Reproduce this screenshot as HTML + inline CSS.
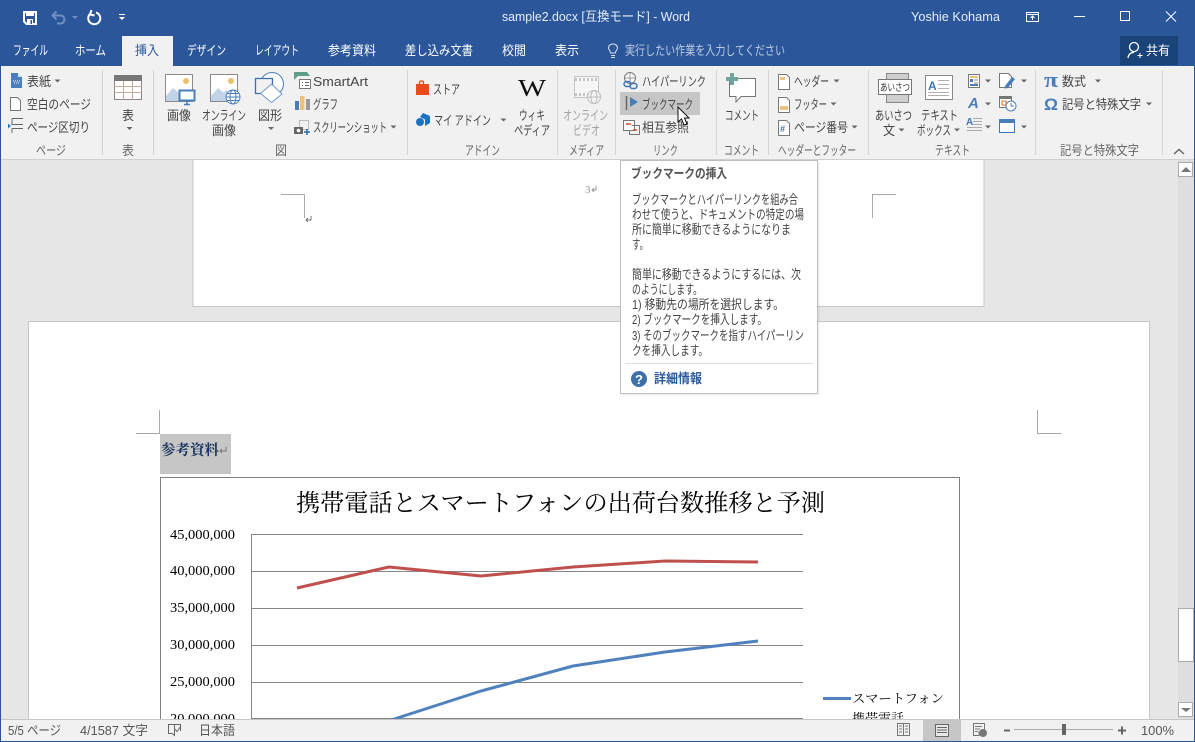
<!DOCTYPE html>
<html lang="ja"><head><meta charset="utf-8"><title>sample2.docx - Word</title>
<style>
html,body{margin:0;padding:0;width:1195px;height:742px;overflow:hidden;background:#e6e6e6}
svg{position:absolute;left:0;top:0;display:block}
text{font-family:"Liberation Sans","Noto Sans CJK JP",sans-serif;font-size:13px;fill:#444;white-space:pre}
.w{fill:#fff}.g{fill:#666}.d{fill:#a3a3a3}
.s{font-family:"Liberation Serif","Noto Serif CJK JP",serif;fill:#000}
.c{fill:#666}
</style></head><body>
<svg width="1195" height="742" viewBox="0 0 1195 742" xmlns="http://www.w3.org/2000/svg">
<!-- doc area -->
<rect x="0" y="160" width="1195" height="560" fill="#e6e6e6"/>
<!-- upper page -->
<rect x="193" y="150" width="791" height="156.500" fill="#fff" stroke="#c6c6c6"/>
<path d="M281 194.500H304.500V218M872.500 218V194.500H896" fill="none" stroke="#a8a8a8"/>
<text x="585" y="193" style="font-size:11px;fill:#999" class="s">3</text>
<path d="M596 186v4h-4m2-2l-2 2 2 2" fill="none" stroke="#999"/>
<path d="M311 216v4h-5m2-2l-2 2 2 2" fill="none" stroke="#777"/>
<!-- lower page -->
<rect x="28.500" y="321.500" width="1121" height="420" fill="#fff" stroke="#c6c6c6"/>
<path d="M159.500 410V433.500H136M1037.500 410V433.500H1061" fill="none" stroke="#a8a8a8"/>
<rect x="160" y="434" width="71" height="40" fill="#c6c6c6"/>
<text x="161" y="455" class="s" textLength="58" lengthAdjust="spacingAndGlyphs" style="font-size:14.500px;font-weight:bold;fill:#17325c">参考資料</text>
<path d="M226 447v4h-6m2-2l-2 2 2 2" fill="none" stroke="#777"/>
<!-- chart -->
<rect x="160.500" y="477.500" width="799" height="270" fill="#fff" stroke="#808080"/>
<text x="296" y="511" class="s" textLength="529" lengthAdjust="spacingAndGlyphs" style="font-size:24px">携帯電話とスマートフォンの出荷台数推移と予測</text>
<g fill="none" stroke="#868686">
<path d="M251.500 534V720M251 534.500H803M251 571.500H803M251 608.500H803M251 645.500H803M251 682.500H803M251 718.500H803"/>
</g>
<text class="s" x="170" y="539" textLength="65" lengthAdjust="spacingAndGlyphs" style="font-size:14px">45,000,000</text>
<text class="s" x="170" y="575" textLength="65" lengthAdjust="spacingAndGlyphs" style="font-size:14px">40,000,000</text>
<text class="s" x="170" y="612" textLength="65" lengthAdjust="spacingAndGlyphs" style="font-size:14px">35,000,000</text>
<text class="s" x="170" y="649" textLength="65" lengthAdjust="spacingAndGlyphs" style="font-size:14px">30,000,000</text>
<text class="s" x="170" y="686" textLength="65" lengthAdjust="spacingAndGlyphs" style="font-size:14px">25,000,000</text>
<text class="s" x="170" y="723" textLength="65" lengthAdjust="spacingAndGlyphs" style="font-size:14px">20,000,000</text>
<polyline points="297,588 389,567 481,576 573,567 665,561 758,562" fill="none" stroke="#c0504d" stroke-width="3" stroke-linejoin="round"/>
<polyline points="385,722 481,691 573,666 665,652 758,641" fill="none" stroke="#4f81bd" stroke-width="3" stroke-linejoin="round"/>
<path d="M823 698.500H851" stroke="#4f81bd" stroke-width="3"/>
<text x="852" y="703" class="s" textLength="92" lengthAdjust="spacingAndGlyphs" style="font-size:13px">スマートフォン</text>
<text x="852" y="723" class="s" textLength="52" lengthAdjust="spacingAndGlyphs" style="font-size:13px">携帯電話</text>
<!-- scrollbar -->
<rect x="1178" y="160" width="16" height="560" fill="#dedede"/>
<rect x="1178.500" y="162.500" width="14" height="14" fill="#fff" stroke="#ababab"/>
<path d="M1181 172l5-5 5 5z" fill="#777"/>
<rect x="1178.500" y="608.500" width="15" height="53" fill="#fff" stroke="#ababab"/>
<rect x="1178.500" y="702.500" width="14" height="14" fill="#fff" stroke="#ababab"/>
<path d="M1181 708h10l-5 4z" fill="#777"/>
<!-- title + tabs -->
<rect x="0" y="0" width="1195" height="66" fill="#2b579a"/>
<rect x="122" y="36" width="51" height="31" fill="#f1f1f1"/>
<rect x="1120" y="36" width="58" height="29" fill="#1a4379"/>
<!-- ribbon -->
<rect x="1" y="66" width="1193" height="93" fill="#f1f1f1"/>
<rect x="0" y="159" width="1195" height="1" fill="#d0d0d0"/>
<path d="M102.500 70V155M153.500 70V155M407.500 70V155M557.500 70V155M615.500 70V155M716.500 70V155M768.500 70V155M868.500 70V155M1035.500 70V155M1162.500 70V155" stroke="#d4d4d4" fill="none"/>
<rect x="620" y="92" width="80" height="23" fill="#c6c6c6"/>
<!-- QAT -->
<path d="M24 12H36V24H26.500L24 21.500Z" fill="#2b579a" stroke="#fff" stroke-width="2"/>
<rect x="26" y="11" width="8" height="5" fill="#fff"/>
<rect x="27" y="19" width="6" height="5" fill="#fff"/>
<rect x="30.500" y="20" width="1.500" height="4" fill="#2b579a"/>
<path d="M53 15.500H60.500C63 15.500 64.500 17.500 64.500 19.500C64.500 21.500 63 23.500 60.500 23.500H57M56.500 11.500L52.500 15.500L56.500 19.500" fill="none" stroke="#6f8fc0" stroke-width="2"/>
<path d="M72 16h6l-3 3z" fill="#6f8fc0"/>
<path d="M90 14A6 6 0 1 0 96 12.500M91.500 10L90 14.500L94.500 15.500" fill="none" stroke="#fff" stroke-width="2"/>
<path d="M119 14.500H125" stroke="#fff"/><path d="M119 17h6l-3 3z" fill="#fff"/>
<!-- title texts -->
<text x="502" y="21" textLength="188" lengthAdjust="spacingAndGlyphs" style="fill:#e6ecf5">sample2.docx [互換モード] - Word</text>
<text x="911" y="21" textLength="89" lengthAdjust="spacingAndGlyphs" style="fill:#e6ecf5">Yoshie Kohama</text>
<path d="M1026.500 12.500H1038.500V21.500H1026.500ZM1026.500 14.500H1038.500M1032.500 20V16M1030.500 18L1032.500 16L1034.500 18" fill="none" stroke="#fff"/>
<path d="M1074 16.500H1085" stroke="#fff"/>
<rect x="1120.500" y="11.500" width="9" height="9" fill="none" stroke="#fff"/>
<path d="M1166 11.500L1176 21.500M1176 11.500L1166 21.500" stroke="#fff" fill="none"/>
<!-- tabs text -->
<text x="13" y="55" class="w" textLength="35" lengthAdjust="spacingAndGlyphs">ファイル</text>
<text x="75" y="55" class="w" textLength="31" lengthAdjust="spacingAndGlyphs">ホーム</text>
<text x="135" y="55" textLength="24" lengthAdjust="spacingAndGlyphs" style="fill:#2b579a">挿入</text>
<text x="187" y="55" class="w" textLength="39" lengthAdjust="spacingAndGlyphs">デザイン</text>
<text x="255" y="55" class="w" textLength="44" lengthAdjust="spacingAndGlyphs">レイアウト</text>
<text x="328" y="55" class="w" textLength="48" lengthAdjust="spacingAndGlyphs">参考資料</text>
<text x="405" y="55" class="w" textLength="68" lengthAdjust="spacingAndGlyphs">差し込み文書</text>
<text x="502" y="55" class="w" textLength="24" lengthAdjust="spacingAndGlyphs">校閲</text>
<text x="555" y="55" class="w" textLength="24" lengthAdjust="spacingAndGlyphs">表示</text>
<path d="M611 55.500H615M611 57.500H615M610.500 53C610.500 50 608.500 50 608.500 48C608.500 45.500 610.500 44 613 44C615.500 44 617.500 45.500 617.500 48C617.500 50 615.500 50 615.500 53Z" fill="none" stroke="#d6e0ef"/>
<text x="625" y="55" textLength="160" lengthAdjust="spacingAndGlyphs" style="fill:#bccbe2">実行したい作業を入力してください</text>
<circle cx="1134" cy="47" r="4.500" fill="none" stroke="#fff" stroke-width="1.300"/>
<path d="M1128 58C1128.500 54 1130.500 52.500 1134 52.500" fill="none" stroke="#fff" stroke-width="1.300"/>
<path d="M1137.500 55.500H1142.500M1140 53V58" stroke="#fff"/>
<text x="1146" y="55" class="w" textLength="24" lengthAdjust="spacingAndGlyphs">共有</text>
<!-- page group -->
<path d="M11 73H18L22 77V88H11Z" fill="#4a7ebb"/><path d="M18 73V77H22Z" fill="#dbe6f2"/><path d="M13 81h7M14 83h5" stroke="#fff" stroke-dasharray="1 1"/>
<text x="27" y="86" textLength="24" lengthAdjust="spacingAndGlyphs">表紙</text><path d="M54.500 79.500h6l-3 3z" class="c"/>
<path d="M10.500 97.500H17.500L20.500 100.500V110.500H10.500Z" fill="#fff" stroke="#777"/>
<text x="27" y="109" textLength="64" lengthAdjust="spacingAndGlyphs">空白のページ</text>
<path d="M12 118.500H23M12 118.500V124.500H23M12 128.500V133M12 128.500H23" fill="none" stroke="#666"/><path d="M8 123.500L11 126L8 128.500Z" fill="#2b7cd3"/>
<text x="27" y="132" textLength="63" lengthAdjust="spacingAndGlyphs">ページ区切り</text>
<text x="36" y="155" class="g" textLength="30" lengthAdjust="spacingAndGlyphs">ページ</text>
<!-- table -->
<rect x="114.500" y="75.500" width="27" height="24" fill="#fff" stroke="#888"/>
<path d="M114 86.500H142M114 92.500H142M123.500 81V100M132.500 81V100" stroke="#c3a99a" fill="none"/>
<rect x="114" y="75" width="28" height="6" fill="#777"/>
<text x="122" y="120" textLength="12" lengthAdjust="spacingAndGlyphs">表</text>
<path d="M126.500 127h6l-3 3z" class="c"/>
<text x="122" y="155" class="g" textLength="12" lengthAdjust="spacingAndGlyphs">表</text>
<!-- picture -->
<rect x="165.500" y="74.500" width="27" height="27" fill="#fff" stroke="#8a8a8a"/>
<circle cx="186" cy="81" r="3" fill="#eebf6d"/>
<path d="M166 101V96L173 88L179 93L181 90L186 95V101Z" fill="#c2d3e8"/>
<rect x="179.500" y="90.500" width="15" height="10" fill="#fff" stroke="#4a7ebb" stroke-width="2"/>
<path d="M184 104.500H190M187 101V104" stroke="#4a7ebb" stroke-width="1.500" fill="none"/>
<text x="167" y="120" textLength="24" lengthAdjust="spacingAndGlyphs">画像</text>
<rect x="210.500" y="74.500" width="27" height="27" fill="#fff" stroke="#8a8a8a"/>
<circle cx="231" cy="81" r="3" fill="#eebf6d"/>
<path d="M211 101V96L218 88L224 93L226 90L231 95V101Z" fill="#c2d3e8"/>
<circle cx="233" cy="97" r="7" fill="#fff" stroke="#4a7ebb"/>
<ellipse cx="233" cy="97" rx="3" ry="7" fill="none" stroke="#4a7ebb"/>
<path d="M226 97H240M227 93.500H239M227 100.500H239" stroke="#4a7ebb" fill="none"/>
<text x="202" y="120" textLength="44" lengthAdjust="spacingAndGlyphs">オンライン</text>
<text x="212" y="135" textLength="24" lengthAdjust="spacingAndGlyphs">画像</text>
<!-- shapes -->
<circle cx="272" cy="84" r="11.500" fill="#fff" stroke="#4a7ebb"/>
<rect x="255.500" y="78.500" width="17" height="15" fill="#f1f1f1" stroke="#3c6ea8" stroke-width="1.300"/>
<path d="M271.500 84L282 94L271.500 102.500L260.500 93.500Z" fill="#fff" stroke="#6f9bd0"/>
<text x="258" y="120" textLength="24" lengthAdjust="spacingAndGlyphs">図形</text>
<path d="M268 127h6l-3 3z" class="c"/>
<!-- smartart -->
<path d="M294 72H307L310 76H298L294 80Z" fill="#5e9f8a"/>
<rect x="299.500" y="79.500" width="11" height="9" fill="#fff" stroke="#777"/>
<path d="M302 82.500h1M302 85.500h1M305 82.500h4M305 85.500h4" stroke="#666"/>
<text x="313" y="86" textLength="55" lengthAdjust="spacingAndGlyphs">SmartArt</text>
<rect x="295" y="101" width="4" height="9" fill="#4a7ebb"/><rect x="300" y="96" width="4.500" height="14" fill="#eec27d"/><rect x="306" y="99" width="4" height="11" fill="#999"/>
<text x="313" y="109" textLength="25" lengthAdjust="spacingAndGlyphs">グラフ</text>
<rect x="299.500" y="120.500" width="9" height="9" fill="none" stroke="#888" stroke-dasharray="1 1"/>
<rect x="294" y="127" width="9" height="7" fill="#666"/><circle cx="298.500" cy="130.500" r="1.800" fill="#fff"/>
<path d="M304 132H310M307 129V135" stroke="#2b6cb0" stroke-width="1.500" fill="none"/>
<text x="313" y="132" textLength="74" lengthAdjust="spacingAndGlyphs">スクリーンショット</text>
<path d="M390.500 125.500h6l-3 3z" class="c"/>
<text x="275" y="155" class="g" textLength="12" lengthAdjust="spacingAndGlyphs">図</text>
<!-- addins -->
<path d="M416 84H429V95H416Z" fill="#ea4a1c"/><path d="M419.500 84V82.500C419.500 80.500 423.500 80.500 423.500 82.500V84" fill="none" stroke="#ea4a1c" stroke-width="1.300"/>
<text x="433" y="94" textLength="27" lengthAdjust="spacingAndGlyphs">ストア</text>
<path d="M423 113L430 116V123L425 126V119.500L420 117Z" fill="#1a72c4"/><circle cx="420" cy="122" r="4" fill="#1a72c4"/>
<text x="434" y="125" textLength="57" lengthAdjust="spacingAndGlyphs">マイ アドイン</text>
<path d="M500.500 118.500h6l-3 3z" class="c"/>
<text x="518" y="96" class="s" textLength="28" lengthAdjust="spacingAndGlyphs" style="font-size:24px;fill:#111">W</text>
<text x="519" y="120" textLength="26" lengthAdjust="spacingAndGlyphs">ウィキ</text>
<text x="514" y="135" textLength="36" lengthAdjust="spacingAndGlyphs">ペディア</text>
<text x="465" y="155" class="g" textLength="35" lengthAdjust="spacingAndGlyphs">アドイン</text>
<!-- media -->
<rect x="574.500" y="76.500" width="24" height="21" fill="#f6f6f6" stroke="#c4c4c4"/>
<path d="M575 79.500H598M575 94.500H598" stroke="#c4c4c4" stroke-width="3" stroke-dasharray="2 2"/>
<circle cx="594" cy="97" r="6.500" fill="#f4f4f4" stroke="#bdbdbd"/>
<ellipse cx="594" cy="97" rx="3" ry="6.500" fill="none" stroke="#bdbdbd"/><path d="M588 97H600" stroke="#bdbdbd"/>
<text x="563" y="120" class="d" textLength="45" lengthAdjust="spacingAndGlyphs">オンライン</text>
<text x="573" y="135" class="d" textLength="27" lengthAdjust="spacingAndGlyphs">ビデオ</text>
<text x="569" y="155" class="g" textLength="35" lengthAdjust="spacingAndGlyphs">メディア</text>
<!-- links -->
<circle cx="630" cy="78" r="5.500" fill="#fff" stroke="#777"/><path d="M625 78H635M630 73V83" stroke="#999"/>
<rect x="624" y="81.500" width="7" height="5" rx="2.500" fill="none" stroke="#3f74b5" stroke-width="1.500"/><rect x="630" y="83.500" width="7" height="5" rx="2.500" fill="none" stroke="#3f74b5" stroke-width="1.500"/>
<text x="642" y="86" textLength="64" lengthAdjust="spacingAndGlyphs">ハイパーリンク</text>
<path d="M626.500 96V110" stroke="#666" stroke-width="1.500"/><path d="M630 97L638 102L630 107Z" fill="#4a7ebb"/>
<text x="642" y="109" textLength="51" lengthAdjust="spacingAndGlyphs">ブックマーク</text>
<rect x="623.500" y="120.500" width="11" height="10" fill="#fff" stroke="#777"/><path d="M626 124H631" stroke="#d04a2e" stroke-width="1.500"/>
<path d="M631.500 125.500H639.500V134.500H629.500V131" fill="none" stroke="#777"/><path d="M633 130H637" stroke="#d04a2e" stroke-width="1.500"/>
<text x="642" y="132" textLength="47" lengthAdjust="spacingAndGlyphs">相互参照</text>
<text x="653" y="155" class="g" textLength="25" lengthAdjust="spacingAndGlyphs">リンク</text>
<!-- cursor -->
<path d="M678 107L678 122L681.500 119L684 125L687 124L684.500 118L689 118Z" fill="#fff" stroke="#111" stroke-width="1"/>
<!-- comment -->
<path d="M729.500 78.500H755.500V96.500H741L736 102V96.500H729.500Z" fill="#fff" stroke="#777"/>
<path d="M732 73V85M726 79H738" stroke="#6fa69a" stroke-width="4"/>
<text x="725" y="120" textLength="34" lengthAdjust="spacingAndGlyphs">コメント</text>
<text x="724" y="155" class="g" textLength="35" lengthAdjust="spacingAndGlyphs">コメント</text>
<!-- header/footer -->
<path d="M778.500 74.500H786.500L789.500 77.500V89.500H778.500Z" fill="#fff" stroke="#777"/><rect x="780" y="77" width="5" height="3" fill="#eec27d"/>
<text x="794" y="86" textLength="35" lengthAdjust="spacingAndGlyphs">ヘッダー</text><path d="M833.500 79.500h6l-3 3z" class="c"/>
<path d="M778.500 97.500H786.500L789.500 100.500V112.500H778.500Z" fill="#fff" stroke="#777"/><rect x="780" y="106" width="8" height="4" fill="#eec27d"/>
<text x="794" y="109" textLength="33" lengthAdjust="spacingAndGlyphs">フッター</text><path d="M830.500 102.500h6l-3 3z" class="c"/>
<path d="M778.500 120.500H786.500L789.500 123.500V135.500H778.500Z" fill="#fff" stroke="#777"/>
<text x="780" y="132" style="font-size:9px;font-weight:bold;fill:#3f74b5">#</text>
<text x="794" y="132" textLength="54" lengthAdjust="spacingAndGlyphs">ページ番号</text><path d="M851.500 125.500h6l-3 3z" class="c"/>
<text x="778" y="155" class="g" textLength="78" lengthAdjust="spacingAndGlyphs">ヘッダーとフッター</text>
<!-- text group -->
<rect x="886.500" y="73.500" width="22" height="29" fill="#cfcfcf" stroke="#888"/>
<rect x="878.500" y="79.500" width="33" height="15" fill="#fff" stroke="#777"/>
<text x="880" y="91" textLength="30" lengthAdjust="spacingAndGlyphs" style="font-size:10px;fill:#333">あいさつ</text>
<text x="875" y="120" textLength="37" lengthAdjust="spacingAndGlyphs">あいさつ</text>
<text x="883" y="135" textLength="12" lengthAdjust="spacingAndGlyphs">文</text><path d="M898.500 128.500h6l-3 3z" class="c"/>
<rect x="925.500" y="75.500" width="27" height="24" fill="#fff" stroke="#888"/>
<text x="928" y="90" style="font-size:12px;font-weight:bold;fill:#3f74b5">A</text>
<path d="M938 80.500H949M938 84.500H949M938 88.500H949M928 92.500H949M928 95.500H949" stroke="#b0b0b0" fill="none"/>
<text x="921" y="120" textLength="37" lengthAdjust="spacingAndGlyphs">テキスト</text>
<text x="917" y="135" textLength="34" lengthAdjust="spacingAndGlyphs">ボックス</text><path d="M954 128.500h6l-3 3z" class="c"/>
<rect x="968.500" y="74.500" width="11" height="13" fill="#fff" stroke="#777"/><rect x="970" y="76" width="8" height="2" fill="#eec27d"/><rect x="970" y="79" width="3" height="3" fill="#4a7ebb"/><path d="M974 80h4M974 83h4" stroke="#888"/><rect x="970" y="84" width="8" height="2" fill="#4a7ebb"/>
<path d="M985 79.500h6l-3 3z" class="c"/>
<text x="968" y="108" style="font-size:15px;font-weight:bold;font-style:italic;fill:#4a7ebb">A</text><path d="M985 102.500h6l-3 3z" class="c"/>
<text x="966" y="125" style="font-size:10px;font-weight:bold;fill:#3f74b5">A</text>
<path d="M973 118.500H982M973 121.500H982M973 124.500H982M967 127.500H982M967 130.500H982" stroke="#aaa" fill="none"/>
<path d="M985 125.500h6l-3 3z" class="c"/>
<path d="M999.500 73.500H1008.500L1011.500 76.500V87.500H999.500Z" fill="#fff" stroke="#777"/>
<path d="M1005 86L1012 77L1015 79L1008 88L1004.500 88.500Z" fill="#4a7ebb"/><path d="M1021 79.500h6l-3 3z" class="c"/>
<rect x="999.500" y="96.500" width="12" height="11" fill="#fff" stroke="#777"/><rect x="999" y="96" width="13" height="3" fill="#777"/><rect x="1002" y="101" width="4" height="4" fill="#fff" stroke="#d8702a"/>
<circle cx="1011" cy="106" r="5" fill="#fff" stroke="#4a7ebb"/><path d="M1011 103V106H1014" fill="none" stroke="#4a7ebb"/>
<rect x="999.500" y="119.500" width="15" height="13" fill="#fff" stroke="#3f74b5"/><rect x="999" y="119" width="16" height="4" fill="#4a7ebb"/>
<path d="M1021 125.500h6l-3 3z" class="c"/>
<text x="935" y="155" class="g" textLength="35" lengthAdjust="spacingAndGlyphs">テキスト</text>
<!-- symbols -->
<text x="1044" y="87" class="s" textLength="14" lengthAdjust="spacingAndGlyphs" style="font-size:22px;font-weight:bold;fill:#4a7ebb">π</text>
<text x="1062" y="86" textLength="24" lengthAdjust="spacingAndGlyphs">数式</text><path d="M1095 79.500h6l-3 3z" class="c"/>
<text x="1044" y="110" textLength="14" lengthAdjust="spacingAndGlyphs" style="font-size:17px;font-weight:bold;fill:#4a7ebb">Ω</text>
<text x="1062" y="109" textLength="79" lengthAdjust="spacingAndGlyphs">記号と特殊文字</text><path d="M1146 102.500h6l-3 3z" class="c"/>
<text x="1060" y="155" class="g" textLength="79" lengthAdjust="spacingAndGlyphs">記号と特殊文字</text>
<path d="M1174 154L1179 149.500L1184 154" fill="none" stroke="#666" stroke-width="1.500"/>
<!-- tooltip -->
<rect x="622" y="162" width="197.500" height="233.500" fill="#000" opacity=".06"/>
<rect x="620.500" y="160.500" width="197" height="233" fill="#fff" stroke="#bfbfbf"/>
<text x="631" y="178" textLength="96" lengthAdjust="spacingAndGlyphs" style="font-weight:bold;fill:#555">ブックマークの挿入</text>
<g>
<text x="632" y="204" textLength="166" lengthAdjust="spacingAndGlyphs">ブックマークとハイパーリンクを組み合</text>
<text x="632" y="219" textLength="172" lengthAdjust="spacingAndGlyphs">わせて使うと、ドキュメントの特定の場</text>
<text x="632" y="234" textLength="159" lengthAdjust="spacingAndGlyphs">所に簡単に移動できるようになりま</text>
<text x="632" y="249" textLength="16" lengthAdjust="spacingAndGlyphs">す。</text>
<text x="632" y="279" textLength="169" lengthAdjust="spacingAndGlyphs">簡単に移動できるようにするには、次</text>
<text x="632" y="294" textLength="70" lengthAdjust="spacingAndGlyphs">のようにします。</text>
<text x="632" y="309" textLength="152" lengthAdjust="spacingAndGlyphs">1) 移動先の場所を選択します。</text>
<text x="632" y="324" textLength="135" lengthAdjust="spacingAndGlyphs">2) ブックマークを挿入します。</text>
<text x="632" y="340" textLength="172" lengthAdjust="spacingAndGlyphs">3) そのブックマークを指すハイパーリン</text>
<text x="632" y="355" textLength="76" lengthAdjust="spacingAndGlyphs">クを挿入します。</text>
</g>
<path d="M625 363.500H813" stroke="#e0e0e0"/>
<circle cx="639" cy="379" r="8" fill="#3e6fa8"/>
<text x="639" y="384" text-anchor="middle" style="font-size:13px;font-weight:bold;fill:#fff">?</text>
<text x="654" y="383" textLength="48" lengthAdjust="spacingAndGlyphs" style="font-weight:bold;fill:#2b579a">詳細情報</text>
<!-- status -->
<rect x="0" y="719" width="1195" height="23" fill="#f1f1f1"/>
<path d="M0 719.500H1195" stroke="#c6c6c6"/>
<rect x="0" y="741" width="1195" height="1" fill="#2b579a"/>
<rect x="0" y="0" width="1" height="742" fill="#2b579a"/><rect x="1194" y="0" width="1" height="742" fill="#2b579a"/>
<text x="8" y="735" textLength="53" lengthAdjust="spacingAndGlyphs" style="fill:#555">5/5 ページ</text>
<text x="80" y="735" textLength="68" lengthAdjust="spacingAndGlyphs" style="fill:#555">4/1587 文字</text>
<path d="M168.500 724.500H174.500V735.500L172 733.500H168.500ZM174.500 724.500H180.500V731M175 729L177 731.500L181 726" fill="none" stroke="#666"/>
<text x="199" y="735" textLength="36" lengthAdjust="spacingAndGlyphs" style="fill:#555">日本語</text>
<path d="M897.500 723.500H903.500V735.500H897.500ZM903.500 723.500H909.500V735.500H903.500ZM899 726H902M899 729H902M899 732H902M905 726H908M905 729H908M905 732H908" fill="none" stroke="#777"/>
<rect x="923" y="720" width="38" height="21" fill="#c6c6c6"/>
<rect x="935.500" y="724.500" width="13" height="12" fill="#e8e8e8" stroke="#666"/>
<path d="M937 727.500H947M937 730H947M937 732.500H947" stroke="#666" fill="none"/>
<path d="M973.500 723.500H984.500V732H979V735.500H973.500ZM975 726.500H982M975 729H980M975 731.500H978" fill="none" stroke="#777"/><circle cx="983" cy="733" r="4" fill="#777"/>
<path d="M1004 730.500H1010" stroke="#666" stroke-width="2"/>
<path d="M1014 729.500H1113" stroke="#aaa"/>
<rect x="1062" y="724" width="4" height="11" fill="#666"/>
<path d="M1118 730.500H1126M1122 726.500V734.500" stroke="#666" stroke-width="2"/>
<text x="1141" y="735" textLength="33" lengthAdjust="spacingAndGlyphs" style="fill:#555">100%</text>
</svg>
</body></html>
